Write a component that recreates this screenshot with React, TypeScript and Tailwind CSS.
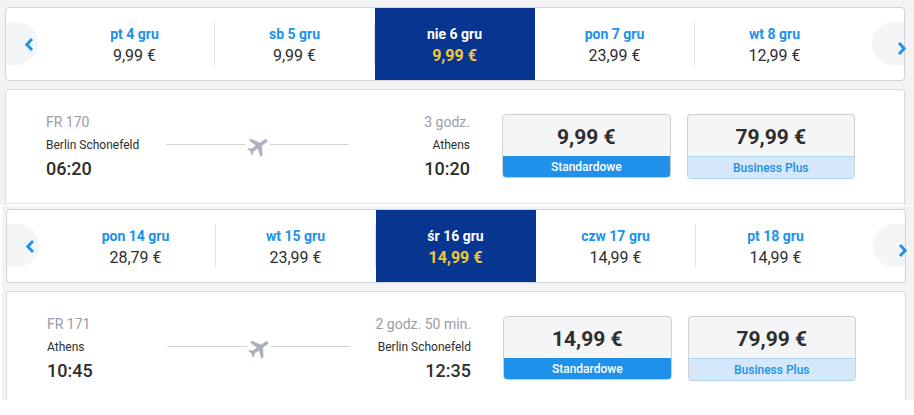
import clsx from "clsx";

interface DayFare {
  day: string;
  price: string;
}

interface Flight {
  number: string;
  duration: string;
  from: string;
  to: string;
  departure: string;
  arrival: string;
  standard: string;
  business: string;
}

const outboundDays: DayFare[] = [
  { day: "pt 4 gru", price: "9,99 €" },
  { day: "sb 5 gru", price: "9,99 €" },
  { day: "nie 6 gru", price: "9,99 €" },
  { day: "pon 7 gru", price: "23,99 €" },
  { day: "wt 8 gru", price: "12,99 €" },
];

const returnDays: DayFare[] = [
  { day: "pon 14 gru", price: "28,79 €" },
  { day: "wt 15 gru", price: "23,99 €" },
  { day: "śr 16 gru", price: "14,99 €" },
  { day: "czw 17 gru", price: "14,99 €" },
  { day: "pt 18 gru", price: "14,99 €" },
];

const outboundFlight: Flight = {
  number: "FR 170",
  duration: "3 godz.",
  from: "Berlin Schonefeld",
  to: "Athens",
  departure: "06:20",
  arrival: "10:20",
  standard: "9,99 €",
  business: "79,99 €",
};

const returnFlight: Flight = {
  number: "FR 171",
  duration: "2 godz. 50 min.",
  from: "Athens",
  to: "Berlin Schonefeld",
  departure: "10:45",
  arrival: "12:35",
  standard: "14,99 €",
  business: "79,99 €",
};

const PlaneIcon = () => (
  <svg viewBox="0 0 24 24" className="h-6 w-6 shrink-0 overflow-visible" fill="#abb0bc" aria-hidden="true">
    <path
      transform="translate(12.3 14) rotate(55) scale(1.04) translate(-11.5 -12)"
      d="M21 16v-2l-8-5V3.5c0-.83-.67-1.5-1.5-1.5S10 2.67 10 3.5V9l-8 5v2l8-2.5V19l-2 1.5V22l3.5-1 3.5 1v-1.5L13 19v-5.5l8 2.5z"
      stroke="#abb0bc"
      strokeWidth="0.4"
    />
  </svg>
);

const ArrowButton = ({ direction }: { direction: "prev" | "next" }) => (
  <button
    type="button"
    aria-label={direction === "prev" ? "Poprzednie dni" : "Następne dni"}
    className={clsx(
      "mt-[14px] flex h-[43px] w-8 shrink-0 justify-end bg-[#f3f5f7]",
      direction === "prev" ? "rounded-r-full pt-4 pr-[5px]" : "rounded-l-full pt-5",
    )}
  >
    <svg
      viewBox="0 0 8 13"
      className={clsx("h-[13px] w-2 shrink-0", direction === "next" && "-mr-0.5")}
      fill="none"
      stroke="#2091eb"
      strokeWidth="2.8"
      aria-hidden="true"
    >
      <path d={direction === "prev" ? "M7 1 1.8 6.5 7 12" : "M1 1 6.2 6.5 1 12"} />
    </svg>
  </button>
);

const DayTabs = ({ days, selected }: { days: DayFare[]; selected: number }) => (
  <div className="flex h-[74px] items-start justify-between rounded border border-[#cfd2d7] bg-white">
    <ArrowButton direction="prev" />
    <div className="mx-[17px] flex h-full flex-1">
      {days.map(({ day, price }, i) => (
        <button
          key={day}
          type="button"
          aria-pressed={i === selected}
          className={clsx(
            "flex flex-1 items-center",
            i === selected ? "bg-[#073590] text-white" : "text-[#2091eb]",
          )}
        >
          <span
            className={clsx(
              "flex h-[42px] flex-1 flex-col items-center border-r",
              i === selected || i === days.length - 1 ? "border-transparent" : "border-[#dfe1e5]",
            )}
          >
            <span className="text-sm leading-[22px] font-bold">{day}</span>
            <span
              className={clsx(
                "text-base leading-[22px]",
                i === selected ? "font-bold text-[#f1c933]" : "text-[#2e2e2e]",
              )}
            >
              {price}
            </span>
          </span>
        </button>
      ))}
    </div>
    <ArrowButton direction="next" />
  </div>
);

const FareButton = ({ price, label, business }: { price: string; label: string; business?: boolean }) => (
  <button
    type="button"
    className={clsx(
      "flex flex-1 flex-col overflow-hidden rounded border border-[#cdd1d5] bg-[#f4f5f7]",
      business && "border-b-[#afd3f0]",
    )}
  >
    <span className="h-[41px] w-full text-[21px] leading-[45px] font-bold text-[#2e2e2e]">{price}</span>
    <span
      className={clsx(
        "w-full text-xs font-medium",
        business
          ? "h-[22px] border-t border-[#afd3f0] bg-[#d4e8f9] leading-[22px] text-[#2091eb]"
          : "h-[21px] bg-[#2091eb] leading-[22px] text-white",
      )}
    >
      {label}
    </span>
  </button>
);

const FlightRow = ({ flight }: { flight: Flight }) => (
  <div className="flex items-start pt-6 pr-[49px] pl-10">
    <div className="mr-8 flex flex-1 items-center text-[#2e2e2e]">
      <div className="flex w-[120px] flex-col gap-[7px]">
        <span className="text-sm leading-4 text-[#9a9ca8]">{flight.number}</span>
        <span className="text-xs leading-4">{flight.from}</span>
        <span className="text-lg leading-[18px] font-medium">{flight.departure}</span>
      </div>
      <div className="flex flex-1 items-center pb-1">
        <span className="h-px flex-1 bg-[#d0d2d6]" />
        <PlaneIcon />
        <span className="h-px flex-1 bg-[#d0d2d6]" />
      </div>
      <div className="flex w-[121px] flex-col gap-[7px] text-right">
        <span className="text-sm leading-4 text-[#9a9ca8]">{flight.duration}</span>
        <span className="text-xs leading-4">{flight.to}</span>
        <span className="text-lg leading-[18px] font-medium">{flight.arrival}</span>
      </div>
    </div>
    <div className="flex w-[353px] items-start gap-4">
      <FareButton price={flight.standard} label="Standardowe" />
      <FareButton price={flight.business} label="Business Plus" business />
    </div>
  </div>
);

export default function App() {
  return (
    <main className="bg-white font-[Roboto,sans-serif]">
      <section className="mb-px bg-[#f3f3f3] pt-[7px] pr-[9px] pl-[5px]">
        <DayTabs days={outboundDays} selected={2} />
        <div className="mt-2 rounded-t border border-b-0 border-[#d7dbe1] bg-white pb-px">
          <div className="border-b border-[#e1e4e8] pb-6">
            <FlightRow flight={outboundFlight} />
          </div>
        </div>
      </section>
      <section className="ml-0.5 bg-[#f3f3f3] pt-[3px] pr-2 pl-1">
        <DayTabs days={returnDays} selected={2} />
        <div className="mt-2 rounded-t border border-b-0 border-[#d7dbe1] bg-white pb-[19px]">
          <FlightRow flight={returnFlight} />
        </div>
      </section>
    </main>
  );
}
